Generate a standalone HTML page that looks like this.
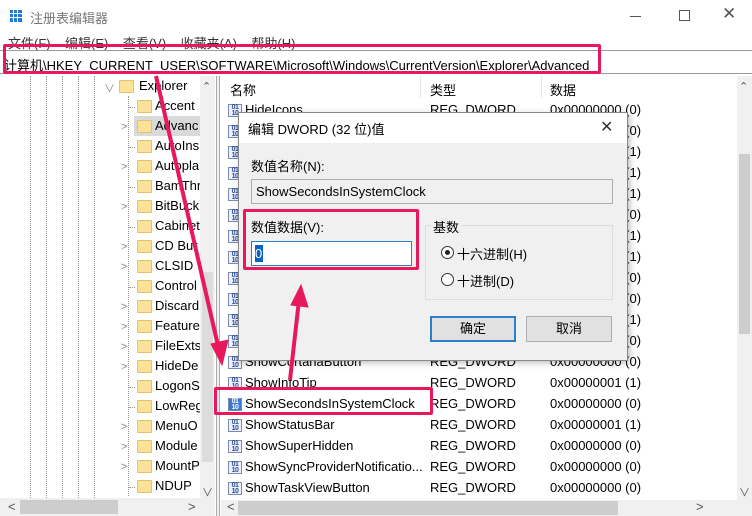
<!DOCTYPE html>
<html><head><meta charset="utf-8"><style>
*{margin:0;padding:0;box-sizing:border-box}
body{width:752px;height:516px;overflow:hidden;background:#fff;font-family:"Liberation Sans","Noto Sans CJK SC",sans-serif;font-size:13px;color:#000;position:relative}
.a{position:absolute;white-space:nowrap}
.dl{position:absolute;top:76px;height:422px;border-left:1px dotted #999}
.fold{position:absolute;width:15px;height:13px;background:#fbe29a;border:1px solid #e2c36a;border-radius:1px}
.chev{position:absolute;color:#888;font-size:11px}
.ico{position:absolute;width:14px;height:13px;border:1px solid #7b8ab3;background:#eef1fb;font-size:7px;line-height:6px;color:#2a4fa0;font-weight:bold;text-align:center;letter-spacing:-0.5px}
.red{position:absolute;border:3px solid #e8195a;border-radius:2px}
</style></head><body>
<div class="a" style="left:10px;top:10px;width:12px;height:12px;background:#1f7ad6"></div>
<div class="a" style="left:10px;top:10px;width:12px;height:12px;background:linear-gradient(90deg,transparent 3px,#fff 3px,#fff 4px,transparent 4px,transparent 7px,#fff 7px,#fff 8px,transparent 8px),linear-gradient(transparent 3px,#fff 3px,#fff 4px,transparent 4px,transparent 7px,#fff 7px,#fff 8px,transparent 8px)"></div>
<div class="a" style="left:30px;top:8px;color:#777;font-size:13px">注册表编辑器</div>
<div class="a" style="left:630px;top:16px;width:11px;border-top:1px solid #555"></div>
<div class="a" style="left:679px;top:10px;width:11px;height:11px;border:1px solid #555"></div>
<div class="a" style="left:722px;top:4px;font-size:17px;color:#555">✕</div>
<div class="a" style="left:8px;top:33px;color:#333">文件(F)&nbsp;&nbsp;&nbsp;&nbsp;编辑(E)&nbsp;&nbsp;&nbsp;&nbsp;查看(V)&nbsp;&nbsp;&nbsp;&nbsp;收藏夹(A)&nbsp;&nbsp;&nbsp;&nbsp;帮助(H)</div>
<div class="a" style="left:0;top:50px;width:752px;height:24px;background:#fff;border-top:1px solid #999;border-bottom:1px solid #999"></div>
<div class="a" style="left:4px;top:55px;font-size:13px">计算机\HKEY_CURRENT_USER\SOFTWARE\Microsoft\Windows\CurrentVersion\Explorer\Advanced</div>
<div class="dl" style="left:30px"></div><div class="dl" style="left:46px"></div><div class="dl" style="left:62px"></div><div class="dl" style="left:78px"></div><div class="dl" style="left:94px"></div><div class="dl" style="left:128px;top:96px;height:400px"></div>
<div class="a" style="left:134px;top:116px;width:66px;height:20px;background:#d9d9d9"></div>
<div class="chev" style="left:104px;top:80px">∨</div>
<div class="fold" style="left:119px;top:80px"></div><div class="a" style="left:139px;top:78px">Explorer</div>
<div id="tree"></div>
<div class="a" style="left:200px;top:76px;width:15px;height:422px;background:#f0f0f0"></div>
<div class="a" style="left:202px;top:272px;width:11px;height:190px;background:#dcdcdc"></div>
<div class="a" style="left:202px;top:80px;font-size:11px;color:#555">⌃</div>
<div class="a" style="left:202px;top:484px;font-size:11px;color:#555">∨</div>
<div class="a" style="left:0;top:498px;width:215px;height:18px;background:#f0f0f0"></div>
<div class="a" style="left:20px;top:500px;width:98px;height:14px;background:#cdcdcd"></div>
<div class="a" style="left:8px;top:499px;color:#555">&lt;</div><div class="a" style="left:188px;top:499px;color:#555">&gt;</div>
<div class="a" style="left:216px;top:76px;width:4px;height:440px;background:#f0f0f0;border-left:1px solid #aaa;border-right:1px solid #aaa"></div>
<div class="a" style="left:230px;top:80px">名称</div>
<div class="a" style="left:420px;top:76px;height:22px;border-left:1px solid #e5e5e5"></div>
<div class="a" style="left:430px;top:80px">类型</div>
<div class="a" style="left:541px;top:76px;height:22px;border-left:1px solid #e5e5e5"></div>
<div class="a" style="left:550px;top:80px">数据</div>
<div id="rows"></div>
<div class="a" style="left:737px;top:76px;width:15px;height:424px;background:#f0f0f0"></div>
<div class="a" style="left:739px;top:154px;width:11px;height:180px;background:#cdcdcd"></div>
<div class="a" style="left:739px;top:80px;font-size:11px;color:#555">⌃</div>
<div class="a" style="left:739px;top:484px;font-size:11px;color:#555">∨</div>
<div class="a" style="left:221px;top:500px;width:531px;height:16px;background:#f0f0f0"></div>
<div class="a" style="left:238px;top:501px;width:380px;height:14px;background:#cdcdcd"></div>
<div class="a" style="left:227px;top:499px;color:#555">&lt;</div><div class="a" style="left:696px;top:499px;color:#555">&gt;</div>
<div class="a" style="left:238px;top:112px;width:390px;height:249px;background:#f0f0f0;border:1px solid #888;box-shadow:2px 2px 6px rgba(0,0,0,.25)">
<div class="a" style="left:0;top:0;width:388px;height:30px;background:#fff"></div>
<div class="a" style="left:9px;top:6px">编辑 DWORD (32 位)值</div>
<div class="a" style="left:361px;top:4px;font-size:16px;color:#333">✕</div>
<div class="a" style="left:12px;top:43px">数值名称(N):</div>
<div class="a" style="left:12px;top:66px;width:362px;height:25px;border:1px solid #adadad;background:#f0f0f0;padding:4px 4px">ShowSecondsInSystemClock</div>
<div class="a" style="left:12px;top:104px">数值数据(V):</div>
<div class="a" style="left:12px;top:128px;width:161px;height:25px;border:1px solid #2d7fc8;background:#fff"></div>
<div class="a" style="left:16px;top:132px;width:8px;height:17px;background:#0a64c8;color:#fff;line-height:17px">0</div>
<div class="a" style="left:186px;top:112px;width:188px;height:75px;border:1px solid #dcdcdc"></div>
<div class="a" style="left:192px;top:104px;background:#f0f0f0;padding:0 2px">基数</div>
<div class="a" style="left:202px;top:133px;width:13px;height:13px;border:1px solid #333;border-radius:50%;background:#fff"></div>
<div class="a" style="left:206px;top:137px;width:5px;height:5px;border-radius:50%;background:#222"></div>
<div class="a" style="left:218px;top:131px">十六进制(H)</div>
<div class="a" style="left:202px;top:160px;width:13px;height:13px;border:1px solid #333;border-radius:50%;background:#fff"></div>
<div class="a" style="left:218px;top:158px">十进制(D)</div>
<div class="a" style="left:191px;top:203px;width:86px;height:26px;border:2px solid #2d7fc8;background:#e1e1e1;text-align:center;line-height:22px">确定</div>
<div class="a" style="left:287px;top:203px;width:86px;height:26px;border:1px solid #adadad;background:#e1e1e1;text-align:center;line-height:24px">取消</div>
</div>
<div class="red" style="left:3px;top:44px;width:598px;height:30px"></div>
<div class="red" style="left:243px;top:209px;width:176px;height:61px"></div>
<div class="red" style="left:214px;top:387px;width:219px;height:28px"></div>
<svg class="a" style="left:0;top:0" width="752" height="516">
<g stroke="#e8195a" stroke-width="4" fill="#e8195a">
<line x1="156" y1="76" x2="219" y2="350"/>
<polygon points="211,344 228,340 222,365" stroke-width="1"/>
<line x1="290" y1="380" x2="299" y2="300"/>
<polygon points="291,305 308,307 301,285" stroke-width="1"/>
</g></svg>
<script>
var t=["Accent","Advanc","AutoIns","Autopla","BamThr","BitBuck","Cabinet","CD Bur","CLSID","Control","Discard","Feature","FileExts","HideDe","LogonS","LowReg","MenuO","Module","MountP","NDUP"];
var ch=[0,1,0,1,0,1,0,1,1,0,1,1,1,1,0,0,1,1,1,0];
var h="";
for(var i=0;i<t.length;i++){var y=97+i*20;
if(ch[i])h+='<div class="chev" style="left:121px;top:'+(y+4)+'px">&gt;</div>';else h+='<div class="a" style="left:129px;top:'+(y+10)+'px;width:6px;border-top:1px dotted #999"></div>';
h+='<div class="fold" style="left:137px;top:'+(y+3)+'px"></div><div class="a" style="left:155px;top:'+(y+1)+'px;width:45px;overflow:hidden">'+t[i]+'</div>';}
document.getElementById("tree").innerHTML=h;
var n=["HideIcons","","","","","","","","","","","","ShowCortanaButton","ShowInfoTip","ShowSecondsInSystemClock","ShowStatusBar","ShowSuperHidden","ShowSyncProviderNotificatio...","ShowTaskViewButton"];
var v=[0,0,1,1,1,0,1,1,0,0,1,0,0,1,0,1,0,0,0];
var r="";
for(var i=0;i<n.length;i++){var y=102+i*21;
r+='<div class="ico" style="left:228px;top:'+(y+2)+'px;'+(i==14?'background:#3a78d8;color:#fff':'')+'">01<br>10</div>';
r+='<div class="a" style="left:245px;top:'+y+'px">'+n[i]+'</div><div class="a" style="left:430px;top:'+y+'px">REG_DWORD</div><div class="a" style="left:550px;top:'+y+'px">0x0000000'+v[i]+' ('+v[i]+')</div>';}
document.getElementById("rows").innerHTML=r;
</script>
</body></html>
